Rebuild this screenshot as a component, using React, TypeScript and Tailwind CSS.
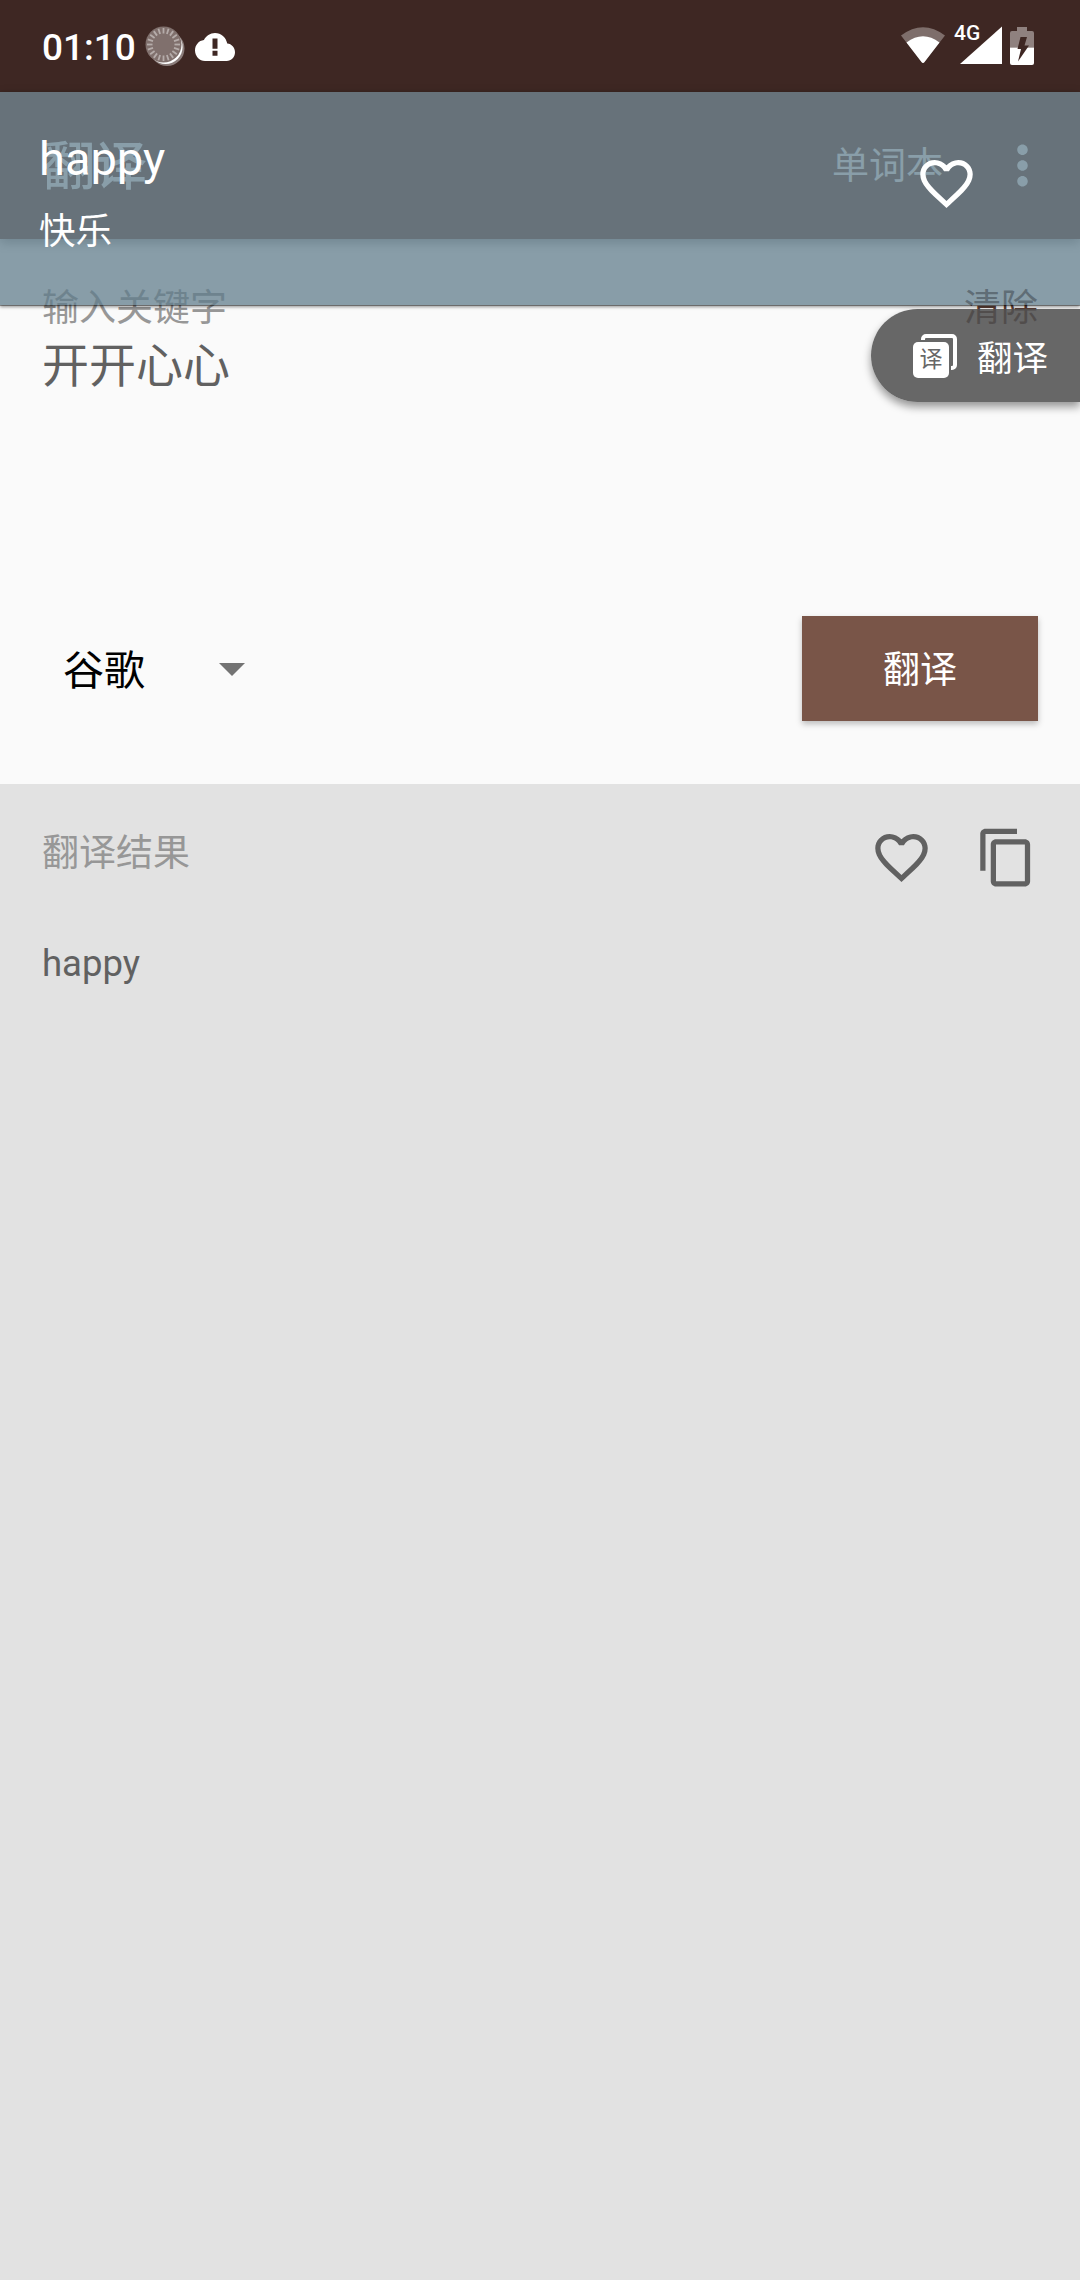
const HEART =
  "M16.5 3c-1.74 0-3.41.81-4.5 2.09C10.91 3.81 9.24 3 7.5 3 4.42 3 2 5.42 2 8.5c0 3.78 3.4 6.86 8.55 11.54L12 21.35l1.45-1.32C18.6 15.36 22 12.28 22 8.5 22 5.42 19.58 3 16.5 3zm-4.4 15.55l-.1.1-.1-.1C7.14 14.24 4 11.39 4 8.5 4 6.5 5.5 5 7.5 5c1.54 0 3.04.99 3.57 2.36h1.87C13.46 5.99 14.96 5 16.5 5c2 0 3.5 1.5 3.5 3.5 0 2.89-3.14 5.74-7.9 10.05z";
const COPY =
  "M16 1H4c-1.1 0-2 .9-2 2v14h2V3h12V1zm3 4H8c-1.1 0-2 .9-2 2v14c0 1.1.9 2 2 2h11c1.1 0 2-.9 2-2V7c0-1.1-.9-2-2-2zm0 16H8V7h11v14z";
const MORE =
  "M12 8c1.1 0 2-.9 2-2s-.9-2-2-2-2 .9-2 2 .9 2 2 2zm0 2c-1.1 0-2 .9-2 2s.9 2 2 2 2-.9 2-2-.9-2-2-2zm0 6c-1.1 0-2 .9-2 2s.9 2 2 2 2-.9 2-2-.9-2-2-2z";

function Icon({ d, className }: { d: string; className: string }) {
  return (
    <svg viewBox="0 0 24 24" fill="currentColor" className={`h-[63px] w-[63px] shrink-0 ${className}`}>
      <path d={d} />
    </svg>
  );
}

function StatusBar() {
  const ticks = Array.from({ length: 20 }, (_, i) => i * 18);
  return (
    <header className="flex h-[92px] shrink-0 items-center bg-[#3e2723] pr-[44px] pl-[42px] text-white">
      <span className="mt-[3px] w-[103px] text-[37px] leading-[44px] font-medium">01:10</span>
      <svg viewBox="0 0 40 40" className="h-[40px] w-[40px]">
        <circle cx="22" cy="22.5" r="17.5" fill="#8b7d7b" />
        <circle cx="20.6" cy="21" r="17" fill="#fff" />
        <circle cx="18.5" cy="18.5" r="18" fill="#80706d" />
        {ticks.map((a) => (
          <path key={a} d="M18.5 2v5.5" stroke="#b5acaa" strokeWidth="1.8" transform={`rotate(${a} 18.5 18.5)`} />
        ))}
      </svg>
      <svg viewBox="0 4 24 16" className="mt-[2px] ml-[10px] h-[28px] w-[40px]" preserveAspectRatio="none">
        <path
          fill="#fff"
          d="M19.35 10.04C18.67 6.59 15.64 4 12 4 9.11 4 6.6 5.64 5.35 8.04 2.34 8.36 0 10.91 0 14c0 3.31 2.69 6 6 6h13c2.76 0 5-2.24 5-5 0-2.64-2.05-4.78-4.65-4.96z"
        />
        <path fill="#3e2723" d="M10.5 7.2h3v5.8h-3zM10.5 14.2h3v2.8h-3z" />
      </svg>
      <svg viewBox="0 0 136 44" className="ml-auto h-[44px] w-[136px] overflow-visible">
        <path d="M1 11.5Q23 -5 45 11.5L24.5 38Q23 40 21.5 38Z" fill="#7e6e6b" />
        <path d="M6.5 18.5Q23 6 39.5 18.5L24.5 38Q23 40 21.5 38Z" fill="#fff" />
        <path d="M102 2.5V40H60Z" fill="#fff" />
        <text x="54" y="15.5" fill="#fff" fontSize="21" className="font-medium">4G</text>
        <path d="M117 3h10v4h5q2 0 2 2v14.500h-24V9q0-2 2-2h5z" fill="#8f817f" />
        <path d="M110 23.5h24v15.5q0 2-2 2h-20q-2 0-2-2z" fill="#fff" />
        <path d="M120.500 13H127L124.500 21.500H129L118 37.500L121 25H117.500Z" fill="#3e2723" />
      </svg>
    </header>
  );
}

function AppBar() {
  return (
    <div className="relative flex h-[147px] shrink-0 items-center bg-[#795548] pr-[26px] pl-[43px] text-white shadow-[0_4px_10px_rgba(0,0,0,0.35)]">
      <h1 className="mt-[4px] text-[52px] leading-[60px] font-medium">翻译</h1>
      <span className="mt-[2px] ml-auto text-[37px] leading-[44px]">单词本</span>
      <Icon d={MORE} className="ml-[48px]" />
    </div>
  );
}

function ResultBanner() {
  return (
    <div className="absolute inset-x-0 top-[92px] flex h-[213px] items-start justify-between bg-[#607d8b]/[0.745] pr-[102px] pl-[39px] text-white shadow-[0_1px_0_rgba(0,0,0,0.35),0_2px_3px_rgba(0,0,0,0.4)]">
      <div className="pt-[37px]">
        <div className="text-[47px] leading-[60px]">happy</div>
        <div className="mt-[21px] text-[36.5px] leading-[44px]">快乐</div>
      </div>
      <Icon d={HEART} className="mt-[60px]" />
    </div>
  );
}

function FloatingTranslate() {
  return (
    <button className="absolute top-[309px] right-0 flex h-[93px] w-[209px] items-center rounded-l-full bg-[#505050]/[0.867] pl-[42px] text-white shadow-[0_5px_8px_rgba(0,0,0,0.4)]">
      <span className="relative h-[44px] w-[44px]">
        <span className="absolute top-0 right-0 h-[36px] w-[36px] rounded-[5px] border-4 border-white" />
        <span className="absolute bottom-0 left-0 h-[38px] w-[38px] rounded-[6px] bg-[#676767]" />
        <span className="absolute bottom-0 left-0 h-[36px] w-[36px] rounded-[5px] bg-white text-center text-[23px] leading-[35px] text-[#676767]">
          译
        </span>
      </span>
      <span className="mt-[6px] ml-[20px] text-[35.5px] leading-[44px]">翻译</span>
    </button>
  );
}

export default function App() {
  return (
    <div className="relative flex h-[2280px] w-[1080px] flex-col overflow-hidden bg-[#e2e2e2] font-[Roboto,'Noto_Sans_CJK_SC',sans-serif]">
      <StatusBar />
      <AppBar />
      <section className="flex h-[545px] shrink-0 flex-col bg-[#fafafa] px-[42px] pt-[48px] pb-[63px]">
        <div className="flex justify-between text-[37px] leading-[44px]">
          <span className="text-[#979797]">输入关键字</span>
          <span className="text-[#5d4037]">清除</span>
        </div>
        <div className="mt-[7px] text-[47px] leading-[56px] text-[#616161]">开开心心</div>
        <div className="mt-auto flex items-center justify-between">
          <div className="flex items-center pl-[21px]">
            <span className="mt-[4px] text-[41px] leading-[50px] text-black">谷歌</span>
            <svg viewBox="0 0 26 13" className="mt-[2px] ml-[74px] h-[13px] w-[26px]">
              <path d="M0 0h26L13 13z" fill="#737373" />
            </svg>
          </div>
          <button className="h-[105px] w-[236px] bg-[#795548] pt-[4px] text-[37px] text-white shadow-[0_3px_6px_rgba(0,0,0,0.25)]">
            翻译
          </button>
        </div>
      </section>
      <section className="flex grow flex-col px-[42px] pt-[42px]">
        <div className="flex h-[63px] items-start text-[#616161]">
          <span className="mr-auto mt-[6px] text-[37px] leading-[44px] text-[#979797]">翻译结果</span>
          <Icon d={HEART} className="" />
          <Icon d={COPY} className="ml-[42px]" />
        </div>
        <p className="mt-[53px] text-[36.5px] leading-[44px] text-[#616161]">happy</p>
      </section>
      <ResultBanner />
      <FloatingTranslate />
    </div>
  );
}
